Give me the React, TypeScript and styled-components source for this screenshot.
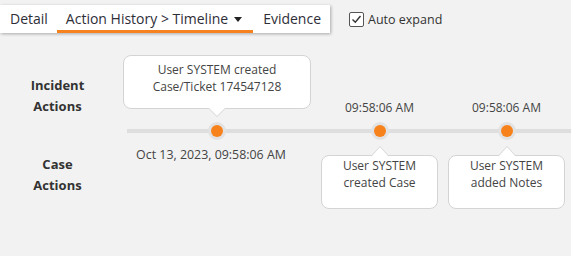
import React from 'react';
import styled, { createGlobalStyle, css } from 'styled-components';

const GlobalStyle = createGlobalStyle`
  body {
    margin: 0;
    background: #f2f2f2;
    font-family: 'Open Sans', 'Noto Sans', sans-serif;
    color: #333;
  }
`;

const Page = styled.div`
  padding-top: 5px;
`;

const TopRow = styled.div`
  display: flex;
  align-items: center;
  height: 28px;
`;

const TabBar = styled.div`
  display: flex;
  height: 28px;
  background: #fff;
  box-shadow: 1px 1px 3px rgba(0, 0, 0, 0.3);
`;

const Tab = styled.div<{ $active?: boolean }>`
  display: flex;
  align-items: center;
  gap: 6px;
  padding: 2px 9px 0 10px;
  font-size: 14px;
  color: #2e2e38;
  box-sizing: border-box;
  border-bottom: 3px solid transparent;
  ${p =>
    p.$active &&
    css`
      border-bottom-color: #f5821f;
      padding-right: 11px;
      padding-left: 9px;
    `}
`;

const Caret = styled.span`
  width: 0;
  height: 0;
  border-left: 4px solid transparent;
  border-right: 4px solid transparent;
  border-top: 5px solid #222;
  margin-top: 1px;
`;

const AutoExpand = styled.label`
  display: flex;
  align-items: center;
  gap: 4px;
  margin-left: 19px;
  font-size: 12.5px;
  color: #333;
`;

const Box = styled.span`
  width: 13px;
  height: 13px;
  border: 1px solid #555;
  border-radius: 2px;
  background: #fff;
  display: flex;
  align-items: center;
  justify-content: center;
`;

const Timeline = styled.div`
  display: flex;
  margin-top: 22px;
`;

const Labels = styled.div`
  width: 115px;
  flex: none;
  display: flex;
  flex-direction: column;
  align-items: center;
  padding-top: 20px;
  gap: 37px;
`;

const RowLabel = styled.div`
  font-size: 13px;
  font-weight: 700;
  line-height: 21px;
  text-align: center;
  color: #333;
`;

const Track = styled.div`
  position: relative;
  flex: 1;
  display: flex;
  gap: 10px;
  padding-left: 8px;

  &::before {
    content: '';
    position: absolute;
    left: 12px;
    right: 0;
    top: 74px;
    height: 4px;
    background: #dedede;
  }
`;

const Event = styled.div<{ $w: number }>`
  width: ${p => p.$w}px;
  flex: none;
  display: flex;
  flex-direction: column;
  align-items: center;
`;

const Upper = styled.div`
  height: 67px;
  width: 100%;
  display: flex;
  flex-direction: column;
  justify-content: flex-end;
  align-items: center;
`;

const DotZone = styled.div`
  position: relative;
  z-index: 1;
  height: 18px;
  display: flex;
  align-items: center;
  justify-content: center;
`;

const Dot = styled.span`
  width: 18px;
  height: 18px;
  border-radius: 50%;
  background: #e2e2e2;
  display: flex;
  align-items: center;
  justify-content: center;

  &::after {
    content: '';
    width: 12px;
    height: 12px;
    border-radius: 50%;
    background: #f7821b;
  }
`;

const Bubble = styled.div<{ $down?: boolean }>`
  position: relative;
  width: 100%;
  height: 54px;
  box-sizing: border-box;
  background: #fff;
  border: 1px solid #d4d4d4;
  border-radius: 8px;
  font-size: 12px;
  line-height: 17px;
  color: #444;
  text-align: center;
  padding: ${p => (p.$down ? '5px 6px 0' : '1px 6px 0')};
  margin: ${p => (p.$down ? '0 0 13px' : '15px 0 0')};

  &::before,
  &::after {
    content: '';
    position: absolute;
    left: 50%;
    width: 0;
    height: 0;
    margin-left: -9px;
    border-left: 9px solid transparent;
    border-right: 9px solid transparent;
  }

  ${p =>
    p.$down
      ? css`
          &::before {
            bottom: -9px;
            border-top: 9px solid #d4d4d4;
          }
          &::after {
            bottom: -8px;
            border-top: 9px solid #fff;
          }
        `
      : css`
          &::before {
            top: -10px;
            border-bottom: 10px solid #d4d4d4;
          }
          &::after {
            top: -9px;
            border-bottom: 10px solid #fff;
          }
        `}
`;

const Stamp = styled.div<{ $below?: boolean }>`
  font-size: 12px;
  line-height: 16px;
  color: #444;
  white-space: nowrap;
  ${p =>
    p.$below
      ? css`
          margin: 7px 12px 0 0;
          font-size: 12.4px;
        `
      : css`
          margin: 0 0 6px;
        `}
`;

export default function App() {
  return (
    <Page>
      <GlobalStyle />
      <TopRow>
        <TabBar>
          <Tab>Detail</Tab>
          <Tab $active>
            Action History &gt; Timeline <Caret />
          </Tab>
          <Tab>Evidence</Tab>
        </TabBar>
        <AutoExpand>
          <Box>
            <svg width="11" height="11" viewBox="0 0 11 11">
              <path d="M1.5 5.5 L4.3 8.3 L9.5 2" fill="none" stroke="#333" strokeWidth="1.4" />
            </svg>
          </Box>
          Auto expand
        </AutoExpand>
      </TopRow>

      <Timeline>
        <Labels>
          <RowLabel>
            Incident
            <br />
            Actions
          </RowLabel>
          <RowLabel>
            Case
            <br />
            Actions
          </RowLabel>
        </Labels>
        <Track>
          <Event $w={188}>
            <Upper>
              <Bubble $down>
                User SYSTEM created
                <br />
                Case/Ticket 174547128
              </Bubble>
            </Upper>
            <DotZone>
              <Dot />
            </DotZone>
            <Stamp $below>Oct 13, 2023, 09:58:06 AM</Stamp>
          </Event>
          <Event $w={117}>
            <Upper>
              <Stamp>09:58:06 AM</Stamp>
            </Upper>
            <DotZone>
              <Dot />
            </DotZone>
            <Bubble>
              User SYSTEM
              <br />
              created Case
            </Bubble>
          </Event>
          <Event $w={117}>
            <Upper>
              <Stamp>09:58:06 AM</Stamp>
            </Upper>
            <DotZone>
              <Dot />
            </DotZone>
            <Bubble>
              User SYSTEM
              <br />
              added Notes
            </Bubble>
          </Event>
        </Track>
      </Timeline>
    </Page>
  );
}
